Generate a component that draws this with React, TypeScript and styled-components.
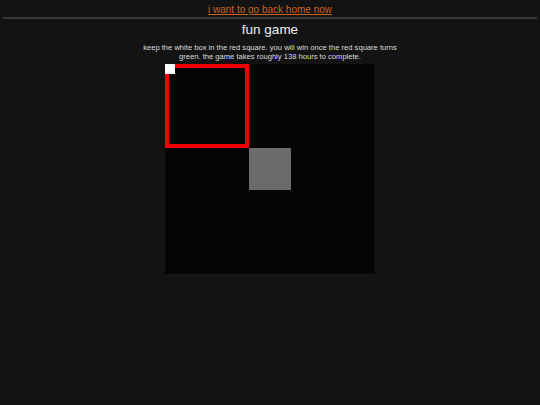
import { createGlobalStyle } from 'styled-components';
import styled from 'styled-components';

const GlobalStyle = createGlobalStyle`
  html, body {
    margin: 0;
    padding: 0;
    background: #131313;
  }
  body {
    font-family: "Liberation Sans", Arial, sans-serif;
    color: #e6e6e6;
  }
`

const Page = styled.div`
  padding: 4px 3px 0 3px;
  display: flex;
  flex-direction: column;
  align-items: center;
`

const HomeLink = styled.a`
  font-size: 10px;
  line-height: 12px;
  color: #c8641e;
  text-decoration: underline;
`

const Rule = styled.div`
  align-self: stretch;
  height: 2px;
  background: #383838;
  margin-top: 1px;
`

const Title = styled.h1`
  margin: 3px 0 0 0;
  font-size: 13.5px;
  line-height: 16px;
  font-weight: normal;
  color: #f0f0f0;
`

const Blurb = styled.p`
  margin: 5px 0 0 0;
  width: 262px;
  font-size: 7.6px;
  line-height: 9px;
  text-align: center;
  color: #dcdcdc;
`

const Board = styled.div`
  position: relative;
  margin-top: 3px;
  width: 210px;
  height: 210px;
  background: #050505;
`

const Zone = styled.div<{ $x: number; $y: number; $size: number; $won: boolean }>`
  position: absolute;
  left: ${p => p.$x}px;
  top: ${p => p.$y}px;
  width: ${p => p.$size}px;
  height: ${p => p.$size}px;
  box-sizing: border-box;
  border: 4px solid ${p => (p.$won ? '#00e000' : '#f00000')};
`

const Block = styled.div<{ $x: number; $y: number; $size: number; $color: string }>`
  position: absolute;
  left: ${p => p.$x}px;
  top: ${p => p.$y}px;
  width: ${p => p.$size}px;
  height: ${p => p.$size}px;
  background: ${p => p.$color};
`

export default function App() {
  return (
    <>
      <GlobalStyle />
      <Page>
        <HomeLink href="#">i want to go back home now</HomeLink>
        <Rule />
        <Title>fun game</Title>
        <Blurb>
          keep the white box in the red square. you will win once the red square turns green. the game takes roughly 138 hours to complete.
        </Blurb>
        <Board>
          <Zone $x={0} $y={0} $size={84} $won={false} />
          <Block $x={84} $y={84} $size={42} $color="#6b6b6b" />
          <Block $x={0} $y={0} $size={10} $color="#ffffff" />
        </Board>
      </Page>
    </>
  )
}
